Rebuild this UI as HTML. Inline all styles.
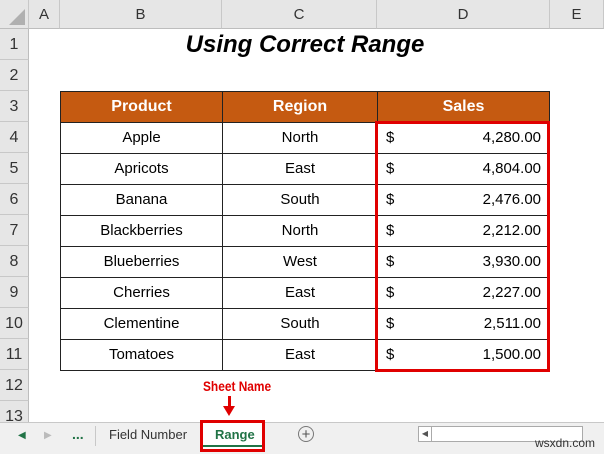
<!DOCTYPE html><html><head><style>
body{margin:0;width:604px;height:454px;overflow:hidden;background:#fff;font-family:"Liberation Sans",Calibri,sans-serif;position:relative}
.a{position:absolute;box-sizing:border-box}
.ch{top:0;height:29px;background:#e6e6e6;border-right:1px solid #c8c8c8;border-bottom:1px solid #bdbdbd;font-size:15px;color:#333;text-align:center;line-height:29px}
.rh{left:0;width:29px;height:31px;background:#e6e6e6;border-bottom:1px solid #c8c8c8;border-right:1px solid #bdbdbd;font-size:16px;color:#333;text-align:center;line-height:31px}
.c{height:32px;border:1px solid #222;font-size:15px;text-align:center;line-height:30px;color:#000}
.h{background:#c55a11;color:#fff;font-weight:bold;font-size:16px}
</style></head><body>
<div class="a ch" style="left:0;width:29px"><div style="position:absolute;right:3px;bottom:3px;width:0;height:0;border-left:16px solid transparent;border-bottom:16px solid #b0b0b0"></div></div>
<div class="a ch" style="left:29px;width:31px">A</div>
<div class="a ch" style="left:60px;width:162px">B</div>
<div class="a ch" style="left:222px;width:155px">C</div>
<div class="a ch" style="left:377px;width:173px">D</div>
<div class="a ch" style="left:550px;width:54px">E</div>
<div class="a rh" style="top:29px">1</div><div class="a rh" style="top:60px">2</div><div class="a rh" style="top:91px">3</div><div class="a rh" style="top:122px">4</div><div class="a rh" style="top:153px">5</div><div class="a rh" style="top:184px">6</div><div class="a rh" style="top:215px">7</div><div class="a rh" style="top:246px">8</div><div class="a rh" style="top:277px">9</div><div class="a rh" style="top:308px">10</div><div class="a rh" style="top:339px">11</div><div class="a rh" style="top:370px">12</div><div class="a rh" style="top:401px">13</div>
<div class="a" style="left:60px;width:490px;top:29px;height:31px;text-align:center;font:italic bold 24px 'Liberation Sans',sans-serif;line-height:31px">Using Correct Range</div>
<div class="a c h" style="left:60px;top:91px;width:163px">Product</div>
<div class="a c h" style="left:222px;top:91px;width:156px">Region</div>
<div class="a c h" style="left:377px;top:91px;width:173px">Sales</div>
<div id="t"></div>
<script>
var d=[["Apple","North","4,280.00"],["Apricots","East","4,804.00"],["Banana","South","2,476.00"],["Blackberries","North","2,212.00"],["Blueberries","West","3,930.00"],["Cherries","East","2,227.00"],["Clementine","South","2,511.00"],["Tomatoes","East","1,500.00"]];
var h="";d.forEach(function(r,i){var y=122+i*31;
h+='<div class="a c" style="left:60px;top:'+y+'px;width:163px">'+r[0]+'</div><div class="a c" style="left:222px;top:'+y+'px;width:156px">'+r[1]+'</div><div class="a c" style="left:377px;top:'+y+'px;width:173px;text-align:left;padding:0 8px"><span>$</span><span style="float:right">'+r[2]+'</span></div>';});
document.getElementById('t').innerHTML=h;
</script>
<div class="a" style="left:375px;top:121px;width:175px;height:251px;border:3px solid #e00000"></div>
<div class="a" style="left:203px;top:378px;font:bold 14px 'Liberation Sans Narrow','Liberation Sans',sans-serif;color:#e00000;transform:scaleX(.85);transform-origin:left">Sheet Name</div>
<div class="a" style="left:228px;top:396px;width:3px;height:12px;background:#e00000"></div>
<div class="a" style="left:223px;top:406px;width:0;height:0;border-left:6px solid transparent;border-right:6px solid transparent;border-top:10px solid #e00000"></div>
<div class="a" style="left:0;top:422px;width:604px;height:32px;background:#f0f0f0;border-top:1px solid #c8c8c8"></div>
<div class="a" style="left:18px;top:430px;font-size:10px;color:#217346">◀</div>
<div class="a" style="left:44px;top:430px;font-size:10px;color:#bbb">▶</div>
<div class="a" style="left:72px;top:426px;font-size:14px;font-weight:bold;color:#217346">...</div>
<div class="a" style="left:95px;top:426px;width:1px;height:20px;background:#c8c8c8"></div>
<div class="a" style="left:109px;top:427px;font-size:13px;color:#333">Field Number</div>
<div class="a" style="left:200px;top:420px;width:65px;height:32px;background:#fff;border:3px solid #e00000"></div>
<div class="a" style="left:215px;top:427px;font-size:13px;font-weight:bold;color:#217346">Range</div>
<div class="a" style="left:203px;top:445px;width:59px;height:2px;background:#217346"></div>
<div class="a" style="left:298px;top:426px;width:16px;height:16px;border:1px solid #777;border-radius:50%;text-align:center;line-height:15px;font-size:15px;color:#555">+</div>
<div class="a" style="left:418px;top:426px;width:165px;height:16px;border:1px solid #aaa;background:#fff"></div>
<div class="a" style="left:418px;top:426px;width:14px;height:16px;border:1px solid #aaa;font-size:8px;text-align:center;line-height:14px;color:#555">◀</div>
<div class="a" style="left:535px;top:436px;font-size:12px;color:#333">wsxdn.com</div>
</body></html>
